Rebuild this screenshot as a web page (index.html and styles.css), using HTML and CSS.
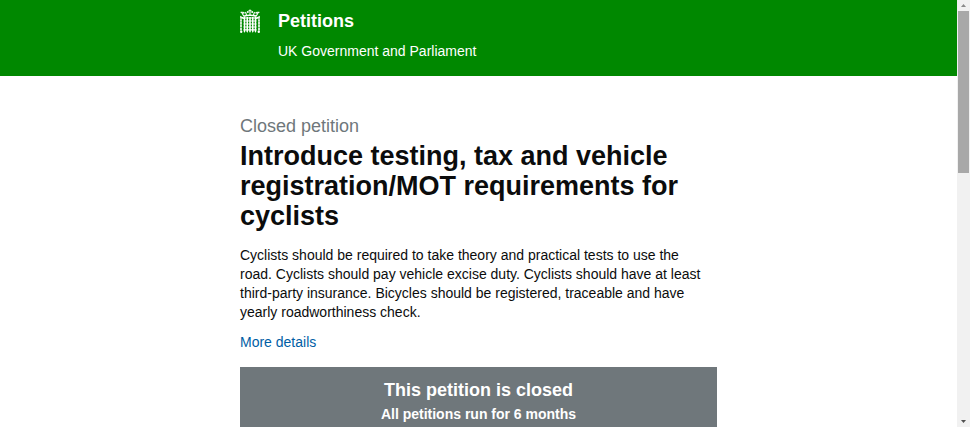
FILE: index.html
```
<!DOCTYPE html>
<html lang="en">
<head>
<meta charset="utf-8">
<meta name="viewport" content="width=device-width, initial-scale=1">
<title>Introduce testing, tax and vehicle registration/MOT requirements for cyclists - Petitions</title>
<link rel="stylesheet" href="styles.css">
</head>
<body>

<div class="page">
  <header class="site-header">
    <div class="wrapper header-inner">
      <!-- Portcullis -->
      <svg class="portcullis" viewBox="0 0 20 24" aria-hidden="true">
        <g fill="none" stroke="#fff">
          <path d="M3.500 7.200Q10 5.200 16.500 7.200" stroke-width="1.6"/>
          <path d="M3.700 7L1.500 3M16.300 7L18.500 3M6.500 6L5.500 3M13.500 6L14.500 3M10 6V0.500" stroke-width="1.100"/>
          <path d="M8.500 1.700H11.500M0.500 3.300H3.500M16.500 3.300H19.500" stroke-width="1"/>
          <path d="M4.500 8V22.500M7.250 8V22.500M10 8V22.500M12.750 8V22.500M15.500 8V22.500" stroke-width="1.500"/>
          <path d="M3.500 9H16.500M3.500 12H16.500M3.500 15H16.500M3.500 18H16.500M3.500 20.800H16.500" stroke-width="1.200"/>
          <path d="M4 9.500L1 8V22M16 9.500L19 8V22" stroke-width="1.600" stroke-dasharray="2.400 0.400"/>
        </g>
        <g fill="#fff">
          <circle cx="3.800" cy="3.800" r="0.900"/>
          <circle cx="7.800" cy="3" r="1"/>
          <circle cx="12.200" cy="3" r="1"/>
          <circle cx="16.200" cy="3.800" r="0.900"/>
          <path d="M3.700 22H5.300L4.500 24ZM6.450 22H8.050L7.250 24ZM9.200 22H10.800L10 24ZM11.950 22H13.550L12.750 24ZM14.700 22H16.300L15.500 24Z"/>
          <circle cx="1.200" cy="22.800" r="1.200"/>
          <circle cx="18.800" cy="22.800" r="1.200"/>
        </g>
      </svg>
      <div class="header-text">
        <a class="logo" href="#">Petitions</a>
        <span class="tagline">UK Government and Parliament</span>
      </div>
    </div>
  </header>

  <main class="wrapper">
    <h1 class="page-title"><span class="pre-heading">Closed petition</span> Introduce testing, tax and vehicle registration/MOT requirements for cyclists</h1>
    <p class="description">Cyclists should be required to take theory and practical tests to use the road. Cyclists should pay vehicle excise duty. Cyclists should have at least third-party insurance. Bicycles should be registered, traceable and have yearly roadworthiness check.</p>
    <a class="more-details" href="#">More details</a>

    <section class="closed-message">
      <h2>This petition is closed</h2>
      <p>All petitions run for 6 months</p>
    </section>
  </main>
</div>

<div class="scrollbar" aria-hidden="true">
  <svg class="arrow" viewBox="0 0 13 11"><path d="M4 7L6.500 4L9 7Z" fill="#8a8a8a"/></svg>
  <div class="track"><div class="thumb"></div></div>
  <svg class="arrow" viewBox="0 0 13 11"><path d="M4 4H9L6.500 7Z" fill="#505050"/></svg>
</div>

</body>
</html>
```
FILE: styles.css
```
* {
  box-sizing: border-box;
}
body {
  margin: 0;
  display: flex;
  height: 100vh;
  overflow: hidden;
  background-color: #fff;
  color: #0b0c0c;
  font-family: "Liberation Sans", Arial, sans-serif;
  font-size: 14px;
  line-height: 19px;
}
h1, h2, p {
  margin: 0;
}
a {
  text-decoration: none;
}
.page {
  flex: 1;
  overflow: hidden;
}
.wrapper {
  max-width: 477px;
  margin: 0 auto;
}

/* Header */
.site-header {
  background-color: #008800;
  color: #fff;
  padding: 9px 0 15px;
}
.header-inner {
  display: flex;
  gap: 18px;
}
.portcullis {
  width: 20px;
  height: 24px;
}
.header-text {
  display: flex;
  flex-direction: column;
  gap: 9px;
}
.logo {
  color: #fff;
  font-size: 18px;
  font-weight: bold;
  line-height: 24px;
}

/* Petition */
.page-title {
  padding-top: 38px;
  font-size: 27px;
  line-height: 30px;
}
.pre-heading {
  display: block;
  margin-bottom: 3px;
  color: #6f777b;
  font-size: 18px;
  font-weight: normal;
  line-height: 24px;
}
.description {
  margin: 15px 0 11px;
  padding-right: 10px;
}
.more-details {
  color: #005ea5;
}
.closed-message {
  margin-top: 15px;
  padding: 11px 15px 15px;
  background-color: #6f777b;
  color: #fff;
  font-weight: bold;
  text-align: center;
}
.closed-message h2 {
  margin-bottom: 3px;
  font-size: 18px;
  line-height: 24px;
}

/* Scrollbar */
.scrollbar {
  display: flex;
  flex-direction: column;
  width: 13px;
  background-color: #f1f1f1;
}
.arrow {
  width: 13px;
  height: 11px;
}
.track {
  flex: 1;
  padding: 0 1px;
}
.thumb {
  height: 40%;
  background-color: #a8a8a8;
}
```
